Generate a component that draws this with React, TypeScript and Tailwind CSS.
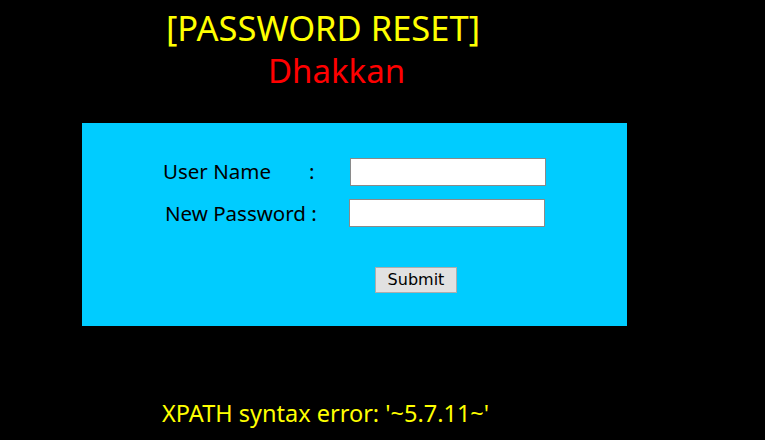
import React from 'react';

const App = () => {
  return (
    <div
      className="w-[765px] h-[440px] overflow-hidden bg-black"
      style={{ fontFamily: '"Noto Sans", "Open Sans", sans-serif' }}
    >
      {/* heading */}
      <div className="pt-[6px] pl-[166px] text-[34.5px] leading-[44px] text-[#ffff00] whitespace-nowrap">
        [PASSWORD RESET]
      </div>
      <div className="pl-[268px] text-[33px] leading-[42px] text-[#ff0000]">Dhakkan</div>

      {/* form box */}
      <div className="ml-[82px] mt-[31px] w-[545px] h-[203px] bg-[#00ccff] pt-[35px] text-black">
        <div className="flex items-center h-[27px]">
          <div className="w-[268px] pl-[81px] text-[20.5px] flex">
            <span className="w-[146px]">User Name</span>
            <span>:</span>
          </div>
          <input
            type="text"
            className="w-[196px] h-[28px] bg-white border border-[#8a8a8a] outline-none"
          />
        </div>
        <div className="flex items-center h-[28px] mt-[14px]">
          <div className="w-[267px] pl-[83px] text-[20.5px] whitespace-nowrap">New Password :</div>
          <input
            type="text"
            className="w-[196px] h-[28px] bg-white border border-[#8a8a8a] outline-none"
          />
        </div>
        <div className="pl-[293px] mt-[40px]">
          <button
            className="w-[82px] h-[26px] bg-[#e1e1e1] border border-[#adadad] text-[16px] leading-none"
            style={{ fontFamily: '"DejaVu Sans", sans-serif' }}
          >
            Submit
          </button>
        </div>
      </div>

      {/* error message */}
      <div className="pl-[162px] mt-[72px] text-[23.5px] leading-[30px] text-[#ffff00] whitespace-nowrap">
        XPATH syntax error: '~5.7.11~'
      </div>
    </div>
  );
};

export default App;
